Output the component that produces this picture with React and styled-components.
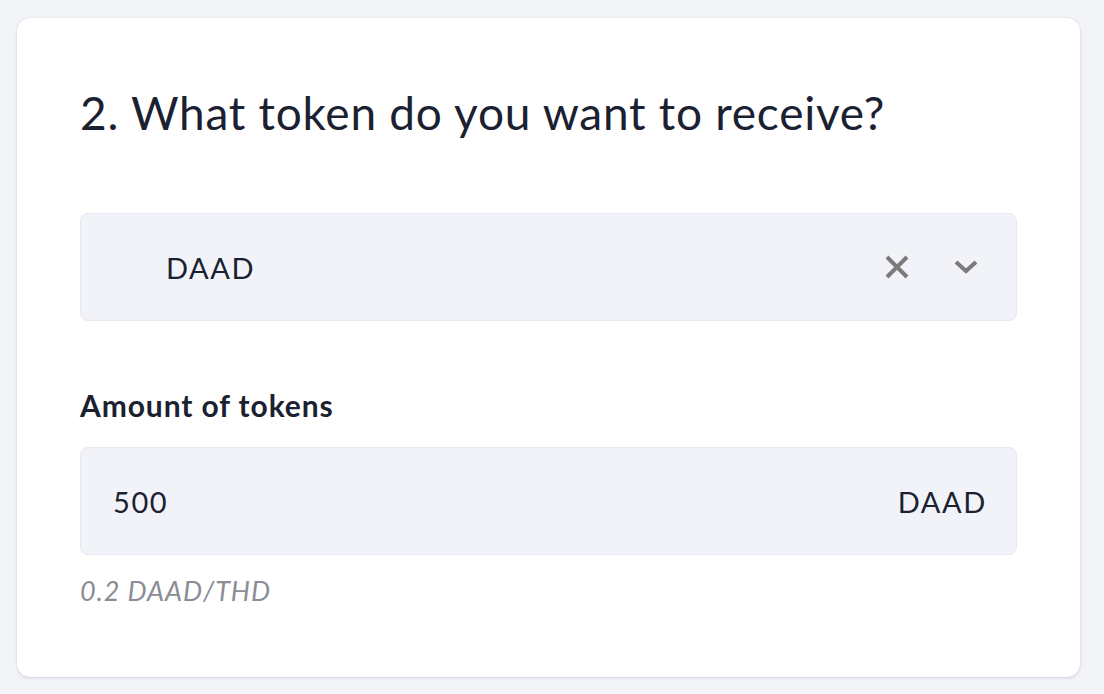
import React from 'react';
import styled, { createGlobalStyle } from 'styled-components';

const GlobalStyle = createGlobalStyle`
  html, body {
    margin: 0;
    padding: 0;
    background: #f3f4f8;
    font-family: Lato, "Noto Sans", sans-serif;
    color: #1b2130;
  }
`;

const Page = styled.div`
  padding: 18px 24px 19px 17px;
`;

const Card = styled.div`
  background: #ffffff;
  border-radius: 13px;
  box-shadow: 0 1px 3px rgba(30, 40, 70, 0.16), 0 0 1px rgba(30, 40, 70, 0.12);
  padding: 67px 63px 70px 63px;
`;

const Title = styled.h2`
  margin: 0;
  font-size: 46px;
  line-height: 56px;
  font-weight: 400;
  letter-spacing: 0.75px;
`;

const Field = styled.div`
  display: flex;
  align-items: center;
  height: 106px;
  margin-top: ${p => p.top}px;
  padding: 0 31px 0 ${p => p.left}px;
  background: #f2f3f8;
  border: 1px solid #e6e8ef;
  border-radius: 8px;
  font-size: 29px;
  letter-spacing: 1.6px;
`;

const Value = styled.span`
  flex: 1;
`;

const Unit = styled.span`
  margin-right: -2px;
`;

const Icons = styled.div`
  display: flex;
  align-items: center;
  gap: 45px;
  margin-right: 7px;
  color: #7b7b7b;
`;

const Label = styled.div`
  margin-top: 66px;
  font-size: 30px;
  line-height: 36px;
  font-weight: 700;
  letter-spacing: 0.9px;
`;

const Hint = styled.div`
  margin-top: 20px;
  font-size: 27px;
  line-height: 32px;
  font-style: italic;
  letter-spacing: 0.9px;
  color: #8a8d96;
`;

const ClearIcon = () => (
  <svg width="24" height="24" viewBox="0 0 24 24" fill="none" stroke="currentColor" strokeWidth="4">
    <path d="M2 2 L22 22 M22 2 L2 22" />
  </svg>
);

const ChevronIcon = () => (
  <svg width="24" height="14" viewBox="0 0 24 14" fill="none" stroke="currentColor" strokeWidth="4">
    <path d="M2 2 L12 11 L22 2" />
  </svg>
);

export default function App() {
  return (
    <Page>
      <GlobalStyle />
      <Card>
        <Title>2. What token do you want to receive?</Title>
        <Field top={72} left={85}>
          <Value>DAAD</Value>
          <Icons>
            <ClearIcon />
            <ChevronIcon />
          </Icons>
        </Field>
        <Label>Amount of tokens</Label>
        <Field top={24} left={32}>
          <Value>500</Value>
          <Unit>DAAD</Unit>
        </Field>
        <Hint>0.2 DAAD/THD</Hint>
      </Card>
    </Page>
  );
}
